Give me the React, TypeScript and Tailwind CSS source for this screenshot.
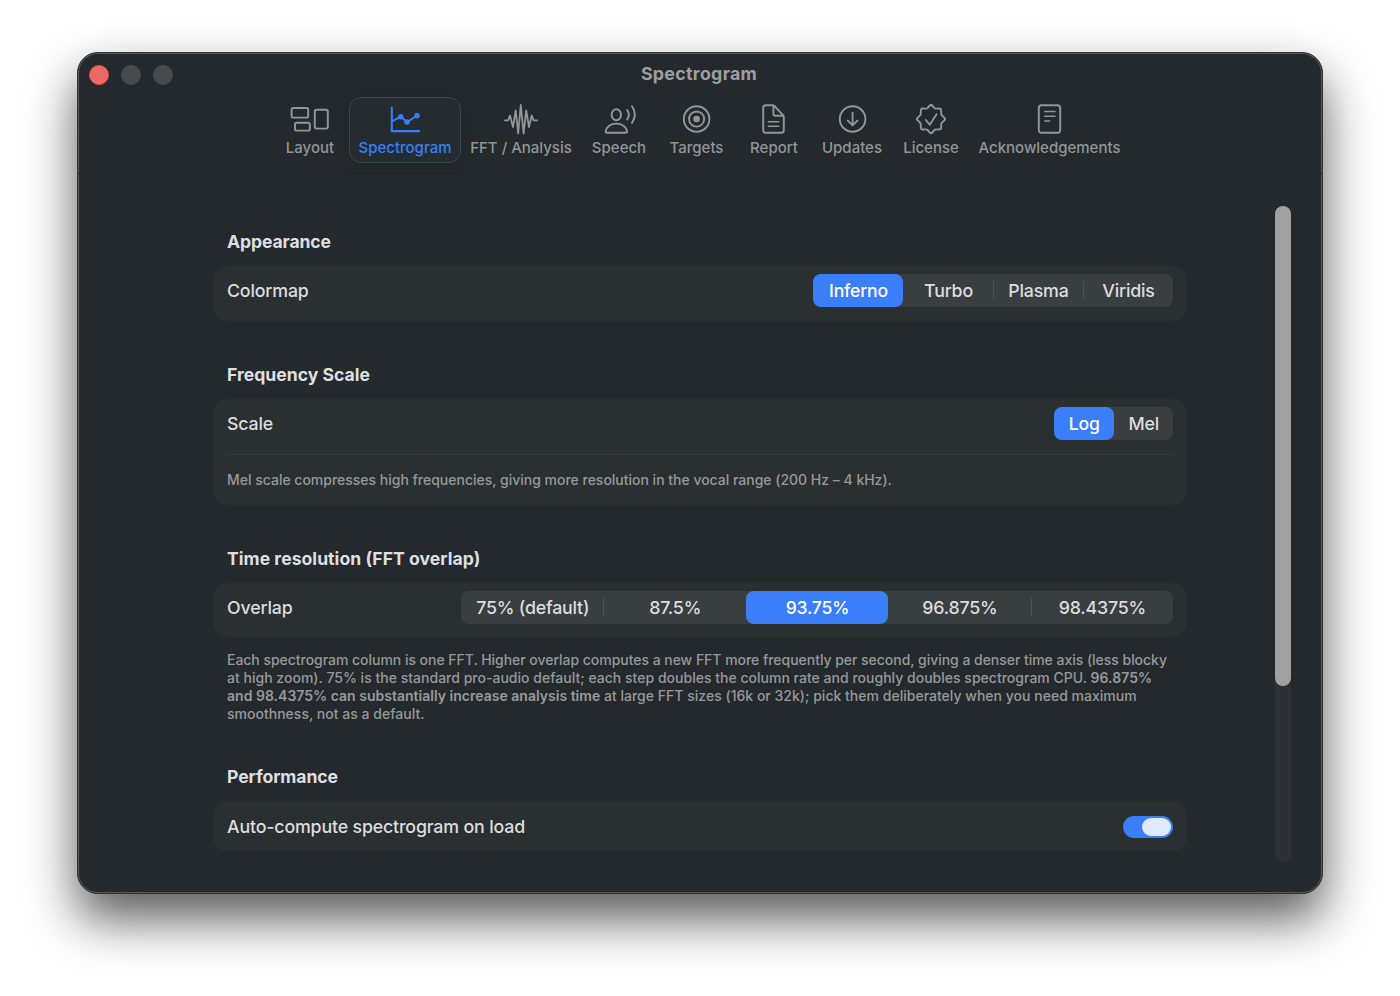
import { useState } from 'react';
import type { ReactNode } from 'react';
import clsx from 'clsx';

interface Tab {
	label: string;
	width: string;
	icon: ReactNode;
}

const tabs: Tab[] = [
	{
		label: 'Layout',
		width: 'w-[78px]',
		icon: (
			<>
				<rect x="1.6" y="5" width="16.6" height="9.6" rx="1.6" />
				<rect x="5" y="19.8" width="14.8" height="7.8" rx="1.6" />
				<rect x="24.8" y="6.8" width="13" height="18.8" rx="1.8" />
			</>
		),
	},
	{
		label: 'Spectrogram',
		width: 'w-[112px]',
		icon: (
			<>
				<path d="M6.8 4.8V28.1H34" strokeWidth={2.1} />
				<path d="M7.2 18.3L15.7 13.7L22 19L32 12.7" />
				<circle cx="15.7" cy="13.7" r="1.8" fill="currentColor" />
				<circle cx="22" cy="19" r="1.8" fill="currentColor" />
				<circle cx="32" cy="12.7" r="1.8" fill="currentColor" />
			</>
		),
	},
	{
		label: 'FFT / Analysis',
		width: 'w-[120px]',
		icon: (
			<path
				strokeWidth={1.8}
				d="M4 17.4H7L9 12.5L12 24L14.7 7.5L17.2 30.5L19.8 1.8L22.6 30.5L25.2 7.5L28 24L30.7 12.5L32.6 17.4H36"
			/>
		),
	},
	{
		label: 'Speech',
		width: 'w-[76px]',
		icon: (
			<>
				<ellipse cx="17.3" cy="11.7" rx="4.7" ry="5.5" />
				<path d="M8 29.8C6.9 29.8 6.5 29.2 6.7 28.2C7.4 24 11.7 20.6 17.3 20.6S27.2 24 28 28.2C28.2 29.2 27.8 29.8 26.7 29.8Z" />
				<path d="M28.2 7C30.2 9.9 30.2 13.5 28.2 16.4" />
				<path d="M33 3.3C36.5 8.5 36.5 14.8 33 20" />
			</>
		),
	},
	{
		label: 'Targets',
		width: 'w-[79px]',
		icon: (
			<>
				<circle cx="19.6" cy="16" r="12.8" />
				<circle cx="19.6" cy="16" r="7.6" />
				<circle cx="19.6" cy="16" r="3.3" fill="currentColor" stroke="none" />
			</>
		),
	},
	{
		label: 'Report',
		width: 'w-[76px]',
		icon: (
			<>
				<path d="M18.8 2.2H11.8Q9.2 2.2 9.2 4.8V27.2Q9.2 29.8 11.8 29.8H27.2Q29.8 29.8 29.8 27.2V14Q29.8 13 29 12.2L20.4 3Q19.7 2.2 18.8 2.2Z" />
				<path d="M19.4 2.8V10.8Q19.4 12.8 21.4 12.8H29.2" />
				<path d="M14.3 18.7H24.8M14.3 23.3H24.8" strokeWidth={1.5} />
			</>
		),
	},
	{
		label: 'Updates',
		width: 'w-[80px]',
		icon: (
			<>
				<circle cx="20.6" cy="16" r="12.8" />
				<path d="M20.6 9.8V22M15.8 17.6L20.6 22.3L25.4 17.6" />
			</>
		),
	},
	{
		label: 'License',
		width: 'w-[78px]',
		icon: (
			<>
				<path d="M18.8 2.5Q20 1.3 21.2 2.5L23.6 5.1Q24.2 5.7 25 5.6L28.2 5.5Q30 5.5 30.1 7.3L30.3 10.8Q30.3 11.7 30.9 12.4L33.5 14.9Q34.7 16 33.5 17.1L30.9 19.6Q30.3 20.3 30.3 21.2L30.1 24.7Q30 26.5 28.2 26.5L25 26.4Q24.2 26.3 23.6 26.9L21.2 29.5Q20 30.7 18.8 29.5L16.4 26.9Q15.8 26.3 15 26.4L11.8 26.5Q10 26.5 9.9 24.7L9.7 21.2Q9.7 20.3 9.1 19.6L6.5 17.1Q5.3 16 6.5 14.9L9.1 12.4Q9.7 11.7 9.7 10.8L9.9 7.3Q10 5.5 11.8 5.5L15 5.6Q15.8 5.7 16.4 5.1Z" />
				<path d="M14.8 17L18.7 21.7L25.6 11.2" />
			</>
		),
	},
	{
		label: 'Acknowledgements',
		width: 'w-[159px]',
		icon: (
			<>
				<rect x="8.8" y="2.2" width="21.4" height="27.6" rx="2.6" />
				<path d="M14.8 8.4H25M14.8 13.2H25M14.8 18H19.6" strokeWidth={1.5} />
			</>
		),
	},
];

function SegmentedControl({
	options,
	initial,
	cell,
}: {
	options: string[];
	initial: string;
	cell: string;
}) {
	const [value, setValue] = useState(initial);
	const active = options.indexOf(value);

	return (
		<div className="flex h-[33px] rounded-lg bg-[#393e40]">
			{options.map((option, i) => (
				<button
					key={option}
					onClick={() => setValue(option)}
					className={clsx(
						'relative flex h-full items-center justify-center whitespace-nowrap rounded-lg pt-px pl-px tracking-[-0.2px]',
						cell,
						i === active ? 'bg-[#3a7ef9] text-[17.6px] font-medium text-white' : 'text-[17.8px] font-[450] text-[#dcddde]',
					)}
				>
					{option}
					{/* Hairline between two unselected segments */}
					{i < options.length - 1 && i !== active && i + 1 !== active && (
						<span className="absolute right-[-1px] top-[7px] h-[19px] w-px bg-[#4e5255]" />
					)}
				</button>
			))}
		</div>
	);
}

function Heading({ children, spacing = 'tracking-[-0.1px]' }: { children: ReactNode; spacing?: string }) {
	return (
		<h2 className={clsx('ml-3.5 h-6 text-[17.6px] leading-[25px] font-bold text-[#dedfe0]', spacing)}>{children}</h2>
	);
}

function Row({ label, children }: { label: string; children: ReactNode }) {
	return (
		<div className="flex h-[33px] items-center justify-between">
			<span className="pt-px text-[17.8px] font-[450] tracking-[-0.17px] text-[#dcddde]">{label}</span>
			{children}
		</div>
	);
}

export default function App() {
	const [tab, setTab] = useState('Spectrogram');
	const [autoCompute, setAutoCompute] = useState(true);

	return (
		<div className="h-[996px] w-[1400px] overflow-hidden bg-white pl-[77px] pt-[52px] font-['Inter',sans-serif]">
			<div className="flex h-[842px] w-[1246px] flex-col overflow-hidden rounded-[21px] border border-[#2f3335] bg-[#24292d] shadow-[inset_0_0_0_1px_#54585a,0_25px_50px_rgba(0,0,0,0.65)]">
				{/* Title bar */}
				<header className="h-[121px] border-b border-[#202427]">
					<div className="grid h-[43px] grid-cols-3 items-center">
						<div className="flex items-center gap-3 pl-[11px]">
							<span className="size-5 rounded-full border border-[#e5534d] bg-[#ee6863]" />
							<span className="size-5 rounded-full bg-[#474b4e]" />
							<span className="size-5 rounded-full bg-[#474b4e]" />
						</div>
						<h1 className="pr-0.5 text-center text-[17.8px] font-bold tracking-[0.3px] text-[#9c9fa1]">Spectrogram</h1>
					</div>
					<nav className="ml-[193px] mt-px flex">
						{tabs.map(({ label, width, icon }) => (
							<button
								key={label}
								onClick={() => setTab(label)}
								className={clsx(
									'flex h-[66px] flex-col items-center rounded-xl border pt-[5px]',
									width,
									tab === label
										? 'border-[#344850] bg-[#252c2f] text-[#3a7ef9] shadow-[0_2px_14px_rgba(0,0,0,0.12)]'
										: 'border-transparent text-[#929698]',
								)}
							>
								<svg
									className="h-8 w-10"
									viewBox="0 0 40 32"
									fill="none"
									stroke="currentColor"
									strokeWidth={1.95}
									strokeLinecap="round"
									strokeLinejoin="round"
								>
									{icon}
								</svg>
								<span className="mt-[1.5px] whitespace-nowrap text-[15px] leading-[22px] font-medium">{label}</span>
							</button>
						))}
					</nav>
				</header>

				<div className="flex flex-1">
					<main className="ml-[135px] w-[974px] pt-[55px]">
						<Heading spacing="tracking-[-0.12px]">Appearance</Heading>
						<section className="mt-[13px] h-[55px] rounded-[14px] bg-[#2a2f31] px-3.5 pt-2">
							<Row label="Colormap">
								<SegmentedControl options={['Inferno', 'Turbo', 'Plasma', 'Viridis']} initial="Inferno" cell="w-[90px]" />
							</Row>
						</section>

						<div className="mt-[41px]">
							<Heading spacing="tracking-[0px]">Frequency Scale</Heading>
						</div>
						<section className="mt-[13px] h-[106px] rounded-[14px] bg-[#2a2f31] px-3.5 pt-2">
							<Row label="Scale">
								<SegmentedControl options={['Log', 'Mel']} initial="Log" cell="w-[59.5px]" />
							</Row>
							<div className="mt-[14px] border-t border-[#363b3d] pt-4 text-[14px] leading-[18px] font-[450] tracking-[-0.01px] text-[#96999b]">
								Mel scale compresses high frequencies, giving more resolution in the vocal range (200 Hz – 4 kHz).
							</div>
						</section>

						<div className="mt-[41px]">
							<Heading spacing="tracking-[0.03px]">Time resolution (FFT overlap)</Heading>
						</div>
						<section className="mt-[13px] h-[54px] rounded-[14px] bg-[#2a2f31] px-3.5 pt-2">
							<Row label="Overlap">
								<SegmentedControl
									options={['75% (default)', '87.5%', '93.75%', '96.875%', '98.4375%']}
									initial="93.75%"
									cell="w-[142.4px]"
								/>
							</Row>
						</section>
						<p className="mx-3.5 mt-[14px] whitespace-nowrap text-[14px] leading-[18px] font-[450] tracking-[0.015px] text-[#96999b]">
							<span className="tracking-[-0.033px]">
								Each spectrogram column is one FFT. Higher overlap computes a new FFT more frequently per second, giving a denser time axis (less blocky
							</span>
							<br />
							at high zoom). 75% is the standard pro-audio default; each step doubles the column rate and roughly doubles spectrogram CPU.{' '}
							<strong className="font-semibold">
								96.875%
								<br />
								and 98.4375% can substantially increase analysis time
							</strong>{' '}
							at large FFT sizes (16k or 32k); pick them deliberately when you need maximum
							<br />
							smoothness, not as a default.
						</p>

						<div className="mt-[41px]">
							<Heading>Performance</Heading>
						</div>
						<section className="mt-[13px] h-[50px] rounded-[14px] bg-[#2a2f31] px-3.5 pt-[9px]">
							<Row label="Auto-compute spectrogram on load">
								<button
									role="switch"
									aria-checked={autoCompute}
									onClick={() => setAutoCompute(!autoCompute)}
									className={clsx(
										'flex h-[22px] w-[50px] items-center rounded-full px-0.5',
										autoCompute ? 'justify-end bg-[#3a7ef9]' : 'bg-[#474b4e]',
									)}
								>
									<span className="h-[18px] w-[29px] rounded-full bg-[#e0eafd]" />
								</button>
							</Row>
						</section>
					</main>

					{/* Scrollbar */}
					<div className="ml-[88px] mt-8 h-[656px] w-4 rounded-full bg-[#2d3135]">
						<div className="h-[480px] rounded-full bg-[#a0a1a3]" />
					</div>
				</div>
			</div>
		</div>
	);
}
